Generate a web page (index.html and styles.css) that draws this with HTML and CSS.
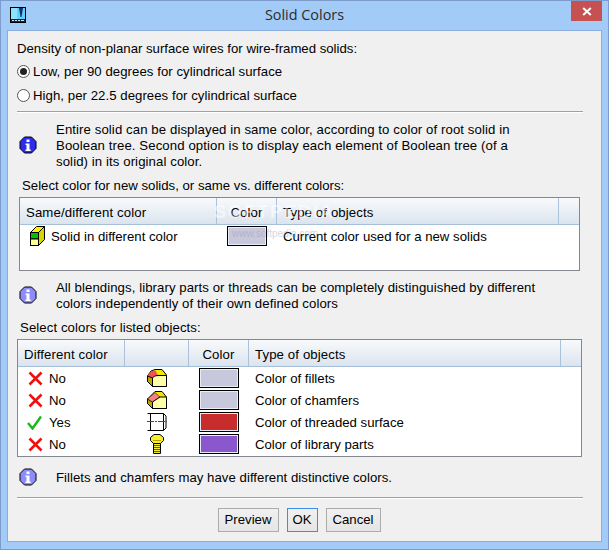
FILE: index.html
```html
<!DOCTYPE html>
<html lang="en">
<head>
<meta charset="utf-8">
<title>Solid Colors</title>
<link rel="stylesheet" href="styles.css">
</head>
<body>
<div class="window">
  <header class="titlebar">
    <svg class="app-icon" width="16" height="16" viewBox="0 0 16 16">
      <rect x="0.5" y="0.5" width="15" height="15" fill="#5fd0fb" stroke="#000"/>
      <rect x="1" y="1" width="6" height="11" fill="#8fe2fc"/>
      <path d="M9 1h4l-1.500 9h-1z" fill="#10346a"/>
      <rect x="1" y="12" width="14" height="3" fill="#0d2a55"/>
      <path d="M2 13.500h2M5 13.500h2M8 13.500h2M11 13.500h3" stroke="#bfe9ff"/>
    </svg>
    <h1 class="title">Solid Colors</h1>
    <button class="close" aria-label="Close">
      <svg width="10" height="9" viewBox="0 0 10 9"><path d="M1.200 1l7.600 7M8.800 1l-7.600 7" stroke="#fff" stroke-width="2" fill="none"/></svg>
    </button>
  </header>
  <main class="client">
    <p class="line">Density of non-planar surface wires for wire-framed solids:</p>
    <div class="radios">
      <label class="radio"><span class="dot on"></span><span class="txt">Low, per 90 degrees for cylindrical surface</span></label>
      <label class="radio"><span class="dot"></span><span class="txt">High, per 22.5 degrees for cylindrical surface</span></label>
    </div>
    <hr class="sep first">

    <section class="info info-1">
      <svg class="info-icon" width="18" height="18" viewBox="0 0 18 18"><path d="M5.500 1h7L17 5.500v7L12.500 17h-7L1 12.500v-7z" fill="#2c2cf0" stroke="#000"/><rect x="7.500" y="3.500" width="3" height="2.500" fill="#fff"/><path d="M6.500 7.500h4v6h1.200v1.500H6.500v-1.500h1v-4.500h-1z" fill="#fff"/></svg>
      <p>Entire solid can be displayed in same color, according to color of root solid in<br>Boolean tree. Second option is to display each element of Boolean tree (of a<br>solid) in its original color.</p>
    </section>

    <p class="line label-a">Select color for new solids, or same vs. different colors:</p>
    <div class="table table-a">
      <div class="thead cols-a">
        <div class="th"><span class="hd">Same/different color</span></div>
        <div class="th center"><span class="hd">Color</span></div>
        <div class="th"><span class="hd">Type of objects</span></div>
        <div class="th end"></div>
      </div>
      <div class="trow cols-a">
        <div class="td solid-cell">
          <svg width="15" height="20" viewBox="0 0 15 20"><path d="M.5 6.500l6-6h8l-6 6z" fill="#f8f400" stroke="#000"/><path d="M8.500 6.500l6-6v13l-6 6z" fill="#d8d400" stroke="#000"/><rect x=".5" y="6.500" width="8" height="6.500" fill="#00c000" stroke="#000"/><rect x=".5" y="13" width="8" height="6.500" fill="#ffff99" stroke="#000"/></svg>
          <span class="txt">Solid in different color</span>
        </div>
        <div class="td center"><span class="swatch grey"></span></div>
        <div class="td"><span class="txt">Current color used for a new solids</span></div>
        <div class="td"></div>
      </div>
      <span class="wm wm-big">SOFTPEDIA</span>
      <span class="wm wm-small">www.softpedia.com</span>
    </div>

    <section class="info info-2">
      <svg class="info-icon" width="18" height="18" viewBox="0 0 18 18"><path d="M5.500 1h7L17 5.500v7L12.500 17h-7L1 12.500v-7z" fill="#8c8cfa" stroke="#000"/><rect x="7.500" y="3.500" width="3" height="2.500" fill="#fff"/><path d="M6.500 7.500h4v6h1.200v1.500H6.500v-1.500h1v-4.500h-1z" fill="#fff"/></svg>
      <p>All blendings, library parts or threads can be completely distinguished by different<br>colors independently of their own defined colors</p>
    </section>

    <p class="line label-b">Select colors for listed objects:</p>
    <div class="table table-b">
      <div class="thead cols-b">
        <div class="th"><span class="hd">Different color</span></div>
        <div class="th"></div>
        <div class="th center"><span class="hd">Color</span></div>
        <div class="th"><span class="hd">Type of objects</span></div>
        <div class="th end"></div>
      </div>
      <div class="trow cols-b">
        <div class="td state"><svg class="mark" width="15" height="15" viewBox="0 0 15 15"><path d="M1.500 1.500l12 12M13.500 1.500l-12 12" stroke="#f01010" stroke-width="2.600" fill="none"/></svg><span class="txt">No</span></div>
        <div class="td center">
          <svg width="20" height="18" viewBox="0 0 20 18"><path d="M.5 7L4 2 8 .5h7L19.500 6v11.500h-14l-5-5z" fill="#f0e800" stroke="#000"/><path d="M.5 7C2 3.500 5 1.500 8.500 1.500L11 6.500C8 6.500 6 8 5.500 9z" fill="#f0505a"/><path d="M.5 7l5 2v8.500l-5-5z" fill="#b8a800" stroke="#000"/><path d="M5.500 17.500V9C6 8 8 6.500 11 6.500h8.500v11z" fill="#ffffa8" stroke="#000"/></svg>
        </div>
        <div class="td center"><span class="swatch grey"></span></div>
        <div class="td"><span class="txt">Color of fillets</span></div>
        <div class="td"></div>
      </div>
      <div class="trow cols-b">
        <div class="td state"><svg class="mark" width="15" height="15" viewBox="0 0 15 15"><path d="M1.500 1.500l12 12M13.500 1.500l-12 12" stroke="#f01010" stroke-width="2.600" fill="none"/></svg><span class="txt">No</span></div>
        <div class="td center">
          <svg width="20" height="18" viewBox="0 0 20 18"><path d="M.5 8L8 .5h7L19.500 6v11.500h-14l-5-5z" fill="#f0e800" stroke="#000"/><path d="M.5 8l5 3v6.500l-5-5z" fill="#b8a800" stroke="#000"/><path d="M.5 8L8 1.500 13 6l-7.500 5z" fill="#f88080" stroke="#000" stroke-width=".5"/><path d="M5.500 17.500V11L13 6h6.500v11.500z" fill="#ffffa8" stroke="#000"/></svg>
        </div>
        <div class="td center"><span class="swatch grey"></span></div>
        <div class="td"><span class="txt">Color of chamfers</span></div>
        <div class="td"></div>
      </div>
      <div class="trow cols-b">
        <div class="td state yes"><svg class="mark" width="15" height="15" viewBox="0 0 15 15"><path d="M1 8l4.500 5.500L14 1.500" stroke="#18b818" stroke-width="2.400" fill="none"/></svg><span class="txt">Yes</span></div>
        <div class="td center">
          <svg width="20" height="18" viewBox="0 0 20 18"><path d="M.5.500H16.500L19 3v12l-2.500 2.500H.5" fill="none" stroke="#000"/><path d="M3.500.5v17M16.500.5v17" stroke="#000" fill="none"/><path d="M0 8.500h20" stroke="#3434f0" stroke-dasharray="7 1 2 1"/></svg>
        </div>
        <div class="td center"><span class="swatch red"></span></div>
        <div class="td"><span class="txt">Color of threaded surface</span></div>
        <div class="td"></div>
      </div>
      <div class="trow cols-b">
        <div class="td state"><svg class="mark" width="15" height="15" viewBox="0 0 15 15"><path d="M1.500 1.500l12 12M13.500 1.500l-12 12" stroke="#f01010" stroke-width="2.600" fill="none"/></svg><span class="txt">No</span></div>
        <div class="td center">
          <svg width="14" height="20" viewBox="0 0 14 20"><path d="M3.500 9.500h7v10h-7z" fill="#f6ee30" stroke="#000"/><path d="M4 11.500h6M4 13.500h6M4 15.500h6M4 17.500h6" stroke="#6a6000"/><path d="M4 .5h6l3.500 3v3l-3 3h-7l-3-3v-3z" fill="#f6ee30" stroke="#000"/><path d="M3 6.500h8" stroke="#b0a400"/></svg>
        </div>
        <div class="td center"><span class="swatch violet"></span></div>
        <div class="td"><span class="txt">Color of library parts</span></div>
        <div class="td"></div>
      </div>
    </div>

    <section class="info info-3">
      <svg class="info-icon" width="18" height="18" viewBox="0 0 18 18"><path d="M5.500 1h7L17 5.500v7L12.500 17h-7L1 12.500v-7z" fill="#8c8cfa" stroke="#000"/><rect x="7.500" y="3.500" width="3" height="2.500" fill="#fff"/><path d="M6.500 7.500h4v6h1.200v1.500H6.500v-1.500h1v-4.500h-1z" fill="#fff"/></svg>
      <p>Fillets and chamfers may have different distinctive colors.</p>
    </section>
    <hr class="sep last">
    <div class="buttons">
      <button class="btn btn-preview">Preview</button>
      <button class="btn btn-ok">OK</button>
      <button class="btn btn-cancel">Cancel</button>
    </div>
  </main>
</div>
</body>
</html>
```

FILE: styles.css
```css
* { box-sizing: border-box; }
html, body { margin: 0; padding: 0; }
body {
  width: 609px;
  height: 550px;
  overflow: hidden;
  font-family: "Liberation Sans", Arial, sans-serif;
  font-size: 13.2px;
  line-height: 16px;
  color: #000;
}
p { margin: 0 0 -1px; padding-top: 1px; }
.window {
  width: 609px;
  height: 550px;
  background: #a3cbf8;
  border: 1px solid #7c9dcc;
  padding: 0 6px 7px;
  display: flex;
  flex-direction: column;
}
.titlebar {
  height: 29px;
  flex: none;
  position: relative;
  display: flex;
  align-items: center;
  justify-content: center;
}
.app-icon { position: absolute; left: 3px; top: 6px; }
.title {
  margin: 0 0 2px;
  font-family: "Open Sans", sans-serif;
  font-weight: 400;
  font-size: 14.4px;
  color: #2b2b2b;
}
.close {
  position: absolute;
  right: 0;
  top: 0;
  width: 31px;
  height: 20px;
  border: 0;
  padding: 0;
  background: #c75050;
  display: flex;
  align-items: center;
  justify-content: center;
}
.client {
  flex: 1;
  background: #f0f0f0;
  border: 1px solid #8aaddb;
  padding: 9px 18px 0 9px;
}
.radios { margin-top: 3px; }
.radio { display: flex; align-items: center; height: 24px; gap: 3px; letter-spacing: .05px; }
.txt { padding-top: 2px; }
.hd { padding-top: 4px; letter-spacing: .12px; }
.dot {
  width: 13px;
  height: 13px;
  border-radius: 50%;
  border: 1px solid #555;
  background: #fff;
  position: relative;
  flex: none;
}
.dot.on::after {
  content: "";
  position: absolute;
  left: 2px;
  top: 2px;
  width: 7px;
  height: 7px;
  border-radius: 50%;
  background: #222;
}
.sep {
  margin: 0;
  height: 2px;
  border: 0;
  border-top: 1px solid #a0a0a0;
  border-bottom: 1px solid #fff;
}
.sep.first { margin-top: 4px; }
.sep.last { margin-top: 11px; }
.info { display: flex; align-items: center; gap: 19px; padding-left: 2px; }
.info-icon { flex: none; }
.info-1 { margin-top: 8px; letter-spacing: .09px; }
.info-2 { margin-top: 8px; letter-spacing: .07px; }
.info-3 { margin-top: 11px; letter-spacing: .035px; }
.label-a { margin-top: 8px; padding-left: 5px; }
.label-b { margin-top: 8px; padding-left: 3px; letter-spacing: .08px; }
.table {
  margin-top: 4px;
  border: 1px solid #828790;
  background: #fff;
  position: relative;
  overflow: hidden;
}
.table-a { margin-left: 2px; width: 561px; height: 74px; }
.table-b { width: 565px; height: 118px; }
.cols-a { display: grid; grid-template-columns: 197px 60px 282px 20px; }
.cols-b { display: grid; grid-template-columns: 107px 64px 60px 312px 20px; }
.thead {
  height: 27px;
  background: linear-gradient(#f8fafc, #dbe4ee);
  border-bottom: 1px solid #a6c0da;
}
.th {
  display: flex;
  align-items: center;
  padding-left: 6px;
  border-right: 1px solid #aac3da;
}
.th.end { border-right: 0; }
.th.center { justify-content: center; padding-left: 0; }
.trow { height: 22px; }
.td { display: flex; align-items: center; padding-left: 6px; }
.td.center { justify-content: center; padding-left: 0; }
.cols-a .td.center { justify-content: flex-start; padding-left: 10px; }
.solid-cell { padding-left: 10px; gap: 6px; }
.state { padding-left: 10px; gap: 6px; }
.state.yes { gap: 7px; padding-left: 9px; }
.swatch {
  display: block;
  width: 40px;
  height: 20px;
  border: 1px solid #000;
  outline: 1px solid #e8ecf4;
  outline-offset: -2px;
}
.grey { background: #c8c8dc; }
.red { background: #c82d2d; }
.violet { background: #8a58cc; }
.wm { position: absolute; pointer-events: none; }
.wm-big {
  left: 194px;
  top: 3px;
  font-size: 18px;
  line-height: 22px;
  letter-spacing: 2px;
  font-weight: 700;
  color: rgba(255, 255, 255, .5);
}
.wm-small {
  left: 212px;
  top: 30px;
  font-size: 10px;
  line-height: 12px;
  color: rgba(130, 130, 160, .35);
}
.buttons { margin-top: 9px; padding-right: 2px; display: flex; justify-content: center; gap: 8px; }
.btn {
  height: 24px;
  font: inherit;
  color: #000;
  padding: 0;
  background: linear-gradient(#f0f0f0, #e5e5e5);
  border: 1px solid #acacac;
}
.btn-preview { width: 61px; }
.btn-ok { width: 31px; border-color: #3c8fe8; }
.btn-cancel { width: 55px; }
```
